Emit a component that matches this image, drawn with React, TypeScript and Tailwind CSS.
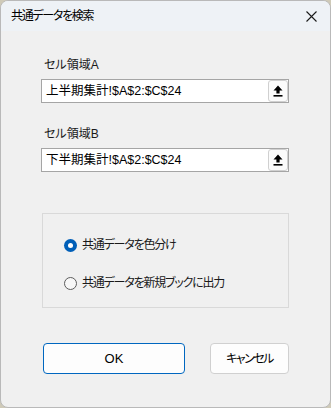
import React from "react";

const UploadIcon: React.FC = () => (
  <svg width="10" height="12" viewBox="0 0 10 12">
    <path d="M5 0.5 L9.5 5.5 L6.6 5.5 L6.6 8.5 L3.4 8.5 L3.4 5.5 L0.5 5.5 Z" fill="#000" />
    <rect x="0.5" y="10" width="9" height="1.6" fill="#000" />
  </svg>
);

const RangeField: React.FC<{ label: string; value: string }> = ({ label, value }) => (
  <div className="flex flex-col">
    <div className="text-[12px] leading-[14px] text-[#1a1a1a] pl-[3px] mb-[7px]">{label}</div>
    <div className="flex items-center h-[24px] border border-[#a5a5a5] bg-white">
      <div className="flex-1 pl-[4px] text-[12.5px] text-black leading-[22px] whitespace-nowrap">{value}</div>
      <button className="w-[20px] h-[22px] flex items-center justify-center bg-[#fbfbfb] border border-[#d0d0d0] rounded-[3px]">
        <UploadIcon />
      </button>
    </div>
  </div>
);

const Radio: React.FC<{ checked?: boolean; label: string }> = ({ checked, label }) => (
  <div className="flex items-center gap-[5px]">
    {checked ? (
      <span className="w-[13px] h-[13px] rounded-full bg-[#005fb8] flex items-center justify-center">
        <span className="w-[5px] h-[5px] rounded-full bg-white" />
      </span>
    ) : (
      <span className="w-[13px] h-[13px] rounded-full border border-[#5c5c5c] bg-[#f7f7f7]" />
    )}
    <span className="text-[12px] leading-[14px] text-[#1a1a1a] tracking-[-1.2px]">{label}</span>
  </div>
);

export default function App() {
  return (
    <div className="w-[331px] h-[408px] bg-[#cfcab8] font-['Liberation_Sans','Noto_Sans_CJK_JP',sans-serif] [font-feature-settings:'palt']">
      <div className="w-full h-full rounded-[8px] overflow-hidden border border-[#b9b9b9] bg-[#f0f0f0] flex flex-col">
        <div className="h-[30px] bg-[#eef2f6] flex items-center justify-between pl-[10px] pr-[10px] shrink-0">
          <span className="text-[12px] text-black tracking-[-1.3px]">共通データを検索</span>
          <svg width="11" height="11" viewBox="0 0 11 11" className="mr-[3px]">
            <path d="M0.5 0.5 L10.5 10.5 M10.5 0.5 L0.5 10.5" stroke="#1a1a1a" strokeWidth="1.1" />
          </svg>
        </div>
        <div className="flex flex-col pl-[40px] pr-[41px] pt-[27px]">
          <RangeField label="セル領域A" value="上半期集計!$A$2:$C$24" />
          <div className="h-[24px]" />
          <RangeField label="セル領域B" value="下半期集計!$A$2:$C$24" />
          <div className="mt-[41px] ml-[1px] h-[95px] border border-[#d9d9d9] flex flex-col pl-[21px] pt-[24px] gap-[24px]">
            <Radio checked label="共通データを色分け" />
            <Radio label="共通データを新規ブックに出力" />
          </div>
          <div className="mt-[35px] flex justify-between pl-[2px]">
            <button className="w-[142px] h-[31px] rounded-[4px] border border-[#0067c0] bg-[#fdfdfd] text-[13px] text-black">
              OK
            </button>
            <button className="w-[79px] h-[31px] rounded-[4px] border border-[#d0d0d0] bg-[#fdfdfd] text-[12px] text-black tracking-[-1.5px]">
              キャンセル
            </button>
          </div>
        </div>
      </div>
    </div>
  );
}
